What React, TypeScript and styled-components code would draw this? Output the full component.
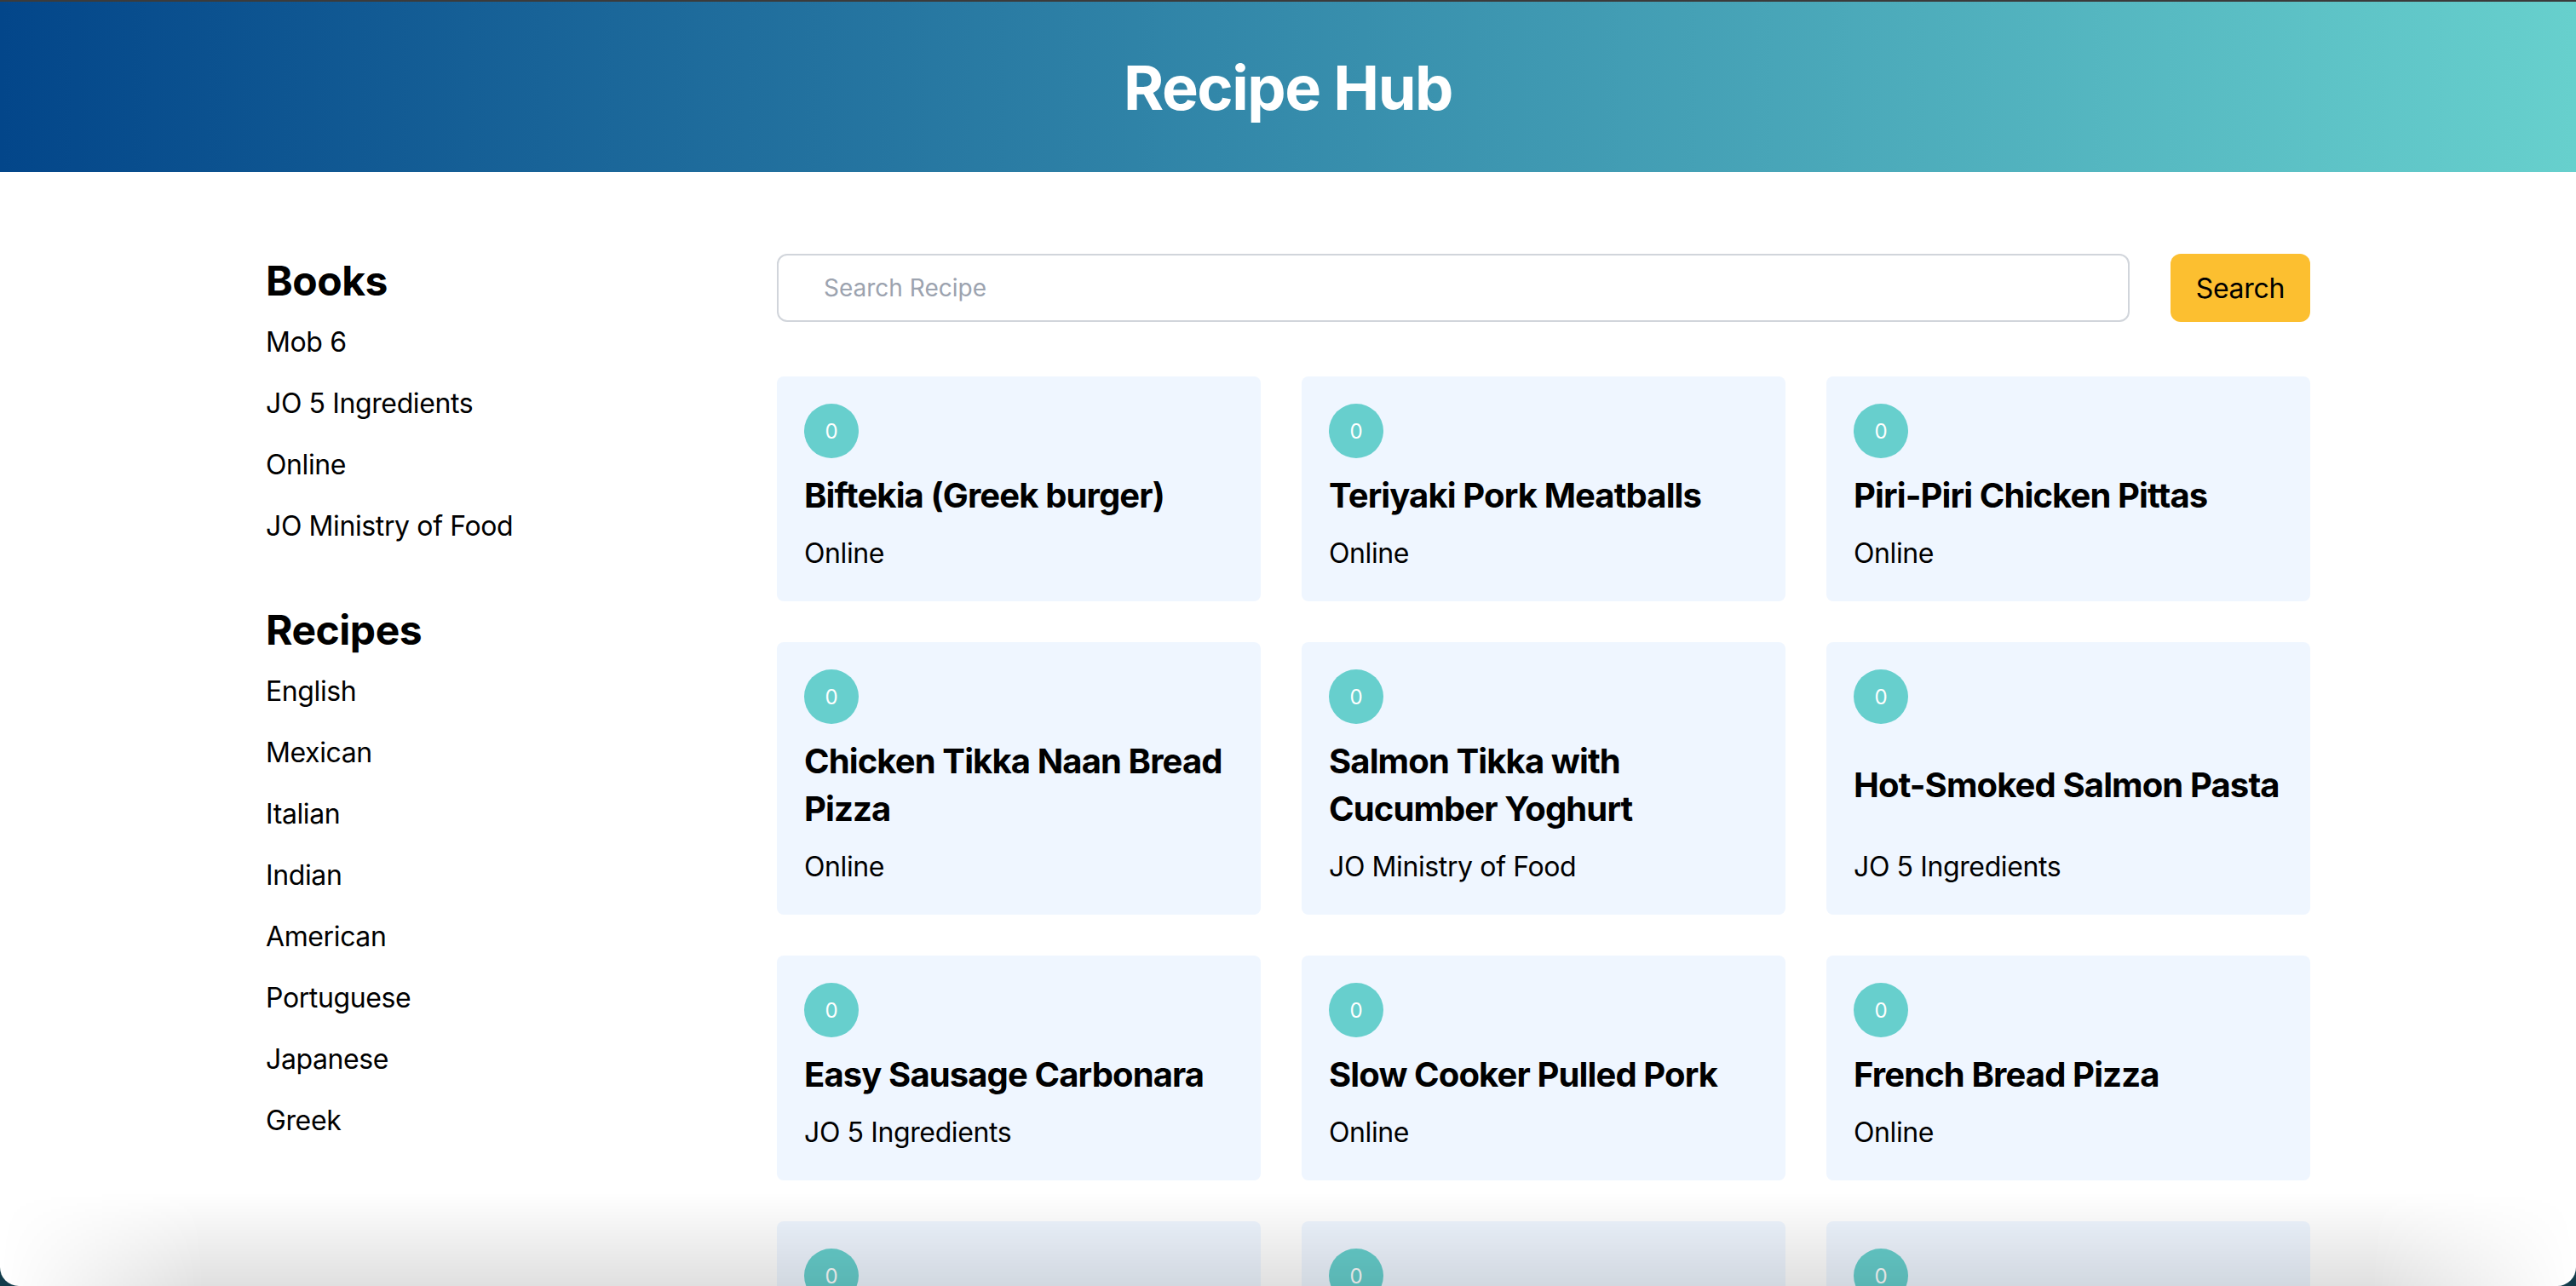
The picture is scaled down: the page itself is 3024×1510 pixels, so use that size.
import styled, { createGlobalStyle } from "styled-components";

const GlobalStyle = createGlobalStyle`
  html, body {
    margin: 0;
    padding: 0;
    background: #ffffff;
  }

  body {
    border-top: 2px solid #3b3b3b;
    font-family: Inter, "Noto Sans", "Liberation Sans", sans-serif;
    color: #000;
  }

  * {
    box-sizing: border-box;
  }
`;

const Header = styled.header`
  height: 200px;
  display: flex;
  align-items: center;
  justify-content: center;
  background: linear-gradient(to right, #03468a 0%, #358bab 50%, #67d0cd 100%);
`;

const Title = styled.h1`
  margin: 0;
  color: #fff;
  font-size: 72px;
  font-weight: 700;
  letter-spacing: -0.02em;
`;

const Layout = styled.main`
  width: 2400px;
  margin: 0 auto;
  padding-top: 96px;
  display: grid;
  grid-template-columns: 600px 1800px;
`;

const Sidebar = styled.aside`
  display: flex;
  flex-direction: column;
  gap: 66px;
`;

const Section = styled.section`
  display: flex;
  flex-direction: column;
`;

const SectionHeading = styled.h2`
  margin: 0 0 16px;
  font-size: 48px;
  line-height: 64px;
  font-weight: 700;
  letter-spacing: -0.01em;
`;

const LinkList = styled.ul`
  list-style: none;
  margin: 0;
  padding: 0;
  display: flex;
  flex-direction: column;
  gap: 24px;
`;

const LinkItem = styled.li`
  font-size: 32px;
  line-height: 48px;
  letter-spacing: -0.012em;
  cursor: pointer;
`;

const Content = styled.div`
  display: flex;
  flex-direction: column;
  gap: 64px;
`;

const SearchBar = styled.form`
  display: flex;
  gap: 48px;
  height: 80px;
`;

const SearchInput = styled.input`
  flex: 1;
  height: 80px;
  border: 2px solid #d1d5db;
  border-radius: 12px;
  padding: 0 0 0 53px;
  font-family: inherit;
  font-size: 28px;
  outline: none;

  &::placeholder {
    color: #9ca3af;
  }
`;

const SearchButton = styled.button`
  height: 80px;
  padding: 0 30px;
  border: none;
  border-radius: 12px;
  background: #fcbf30;
  color: #000;
  font-family: inherit;
  font-size: 32px;
  letter-spacing: -0.01em;
  cursor: pointer;
`;

const CardGrid = styled.div`
  display: grid;
  grid-template-columns: repeat(3, 1fr);
  gap: 48px;
`;

const Card = styled.article`
  background: #eff6ff;
  border-radius: 8px;
  padding: 32px;
  display: flex;
  flex-direction: column;
  justify-content: space-between;
`;

const Badge = styled.span`
  width: 64px;
  height: 64px;
  border-radius: 50%;
  background: #67cfcd;
  color: #fff;
  font-size: 24px;
  display: flex;
  align-items: center;
  justify-content: center;
`;

const CardTitle = styled.h3`
  margin: 16px 0;
  font-size: 40px;
  line-height: 56px;
  font-weight: 700;
  letter-spacing: -0.022em;
`;

const CardSource = styled.p`
  margin: 0;
  font-size: 32px;
  line-height: 48px;
  letter-spacing: -0.012em;
`;

const WindowShade = styled.div`
  position: fixed;
  left: 0;
  right: 0;
  bottom: 0;
  height: 110px;
  pointer-events: none;
  background: linear-gradient(to bottom, rgba(0, 0, 0, 0) 0%, rgba(0, 0, 0, 0.12) 100%);
  -webkit-mask-image: linear-gradient(to right, transparent 0, #000 240px, #000 calc(100% - 240px), transparent 100%);
  mask-image: linear-gradient(to right, transparent 0, #000 240px, #000 calc(100% - 240px), transparent 100%);
`;

const WindowFrame = styled.div`
  position: fixed;
  inset: 0;
  pointer-events: none;
  border-radius: 0 0 22px 22px;
  box-shadow: 0 0 0 40px #123c4b;
`;

const books = ["Mob 6", "JO 5 Ingredients", "Online", "JO Ministry of Food"];
const cuisines = ["English", "Mexican", "Italian", "Indian", "American", "Portuguese", "Japanese", "Greek"];

const recipes = [
    {name: "Biftekia (Greek burger)", book: "Online"},
    {name: "Teriyaki Pork Meatballs", book: "Online"},
    {name: "Piri-Piri Chicken Pittas", book: "Online"},
    {name: "Chicken Tikka Naan Bread Pizza", book: "Online"},
    {name: "Salmon Tikka with Cucumber Yoghurt", book: "JO Ministry of Food"},
    {name: "Hot-Smoked Salmon Pasta", book: "JO 5 Ingredients"},
    {name: "Easy Sausage Carbonara", book: "JO 5 Ingredients"},
    {name: "Slow Cooker Pulled Pork", book: "Online"},
    {name: "French Bread Pizza", book: "Online"},
    {name: "Chicken Fajitas", book: "Mob 6"},
    {name: "Beef Ramen", book: "Online"},
    {name: "Prawn Linguine", book: "JO 5 Ingredients"},
];

function App() {
    return (
        <>
            <GlobalStyle/>
            <Header>
                <Title>Recipe Hub</Title>
            </Header>
            <Layout>
                <Sidebar>
                    <Section>
                        <SectionHeading>Books</SectionHeading>
                        <LinkList>
                            {books.map(b => <LinkItem key={b}>{b}</LinkItem>)}
                        </LinkList>
                    </Section>
                    <Section>
                        <SectionHeading>Recipes</SectionHeading>
                        <LinkList>
                            {cuisines.map(c => <LinkItem key={c}>{c}</LinkItem>)}
                        </LinkList>
                    </Section>
                </Sidebar>
                <Content>
                    <SearchBar onSubmit={e => e.preventDefault()}>
                        <SearchInput type="text" placeholder="Search Recipe"/>
                        <SearchButton type="submit">Search</SearchButton>
                    </SearchBar>
                    <CardGrid>
                        {recipes.map(r => (
                            <Card key={r.name}>
                                <Badge>0</Badge>
                                <CardTitle>{r.name}</CardTitle>
                                <CardSource>{r.book}</CardSource>
                            </Card>
                        ))}
                    </CardGrid>
                </Content>
            </Layout>
            <WindowShade/>
            <WindowFrame/>
        </>
    );
}

export default App;
